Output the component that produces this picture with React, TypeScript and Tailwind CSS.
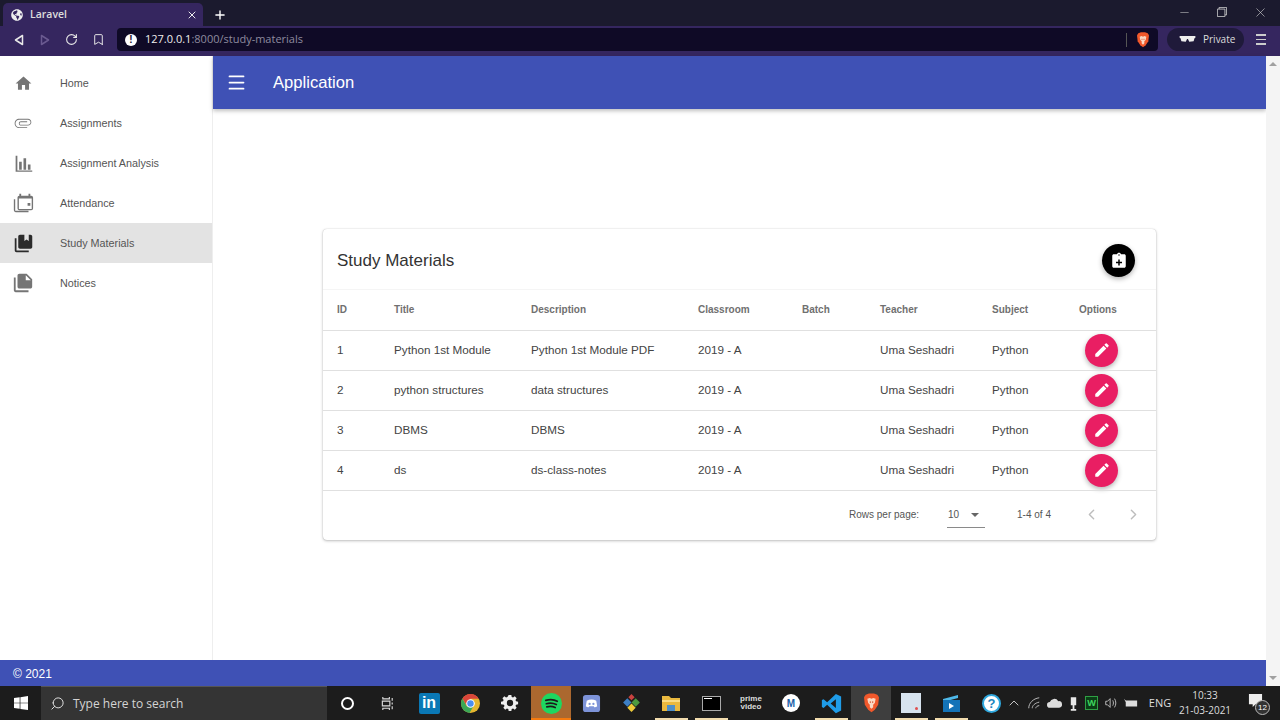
import { FaGlobeAmericas } from "react-icons/fa";
import { Plus, X, Minus, RotateCw, Bookmark, Menu, Search, ChevronUp, ChevronLeft, ChevronRight } from "lucide-react";

const ROWS = [
  { id: 1, title: "Python 1st Module", desc: "Python 1st Module PDF" },
  { id: 2, title: "python structures", desc: "data structures" },
  { id: 3, title: "DBMS", desc: "DBMS" },
  { id: 4, title: "ds", desc: "ds-class-notes" },
];

const HEADS = ["ID", "Title", "Description", "Classroom", "Batch", "Teacher", "Subject"];

const Mui = ({ d, className }: { d: string; className?: string }) => (
  <svg viewBox="0 0 24 24" className={className} fill="currentColor">
    <path d={d} />
  </svg>
);

const NAV = [
  { label: "Home", size: "h-[19px] w-[19px]", d: "M10 20v-6h4v6h5v-8h3L12 3 2 12h3v8z" },
  {
    label: "Assignments",
    size: "h-[20px] w-[20px]",
    d: "M2 12.5C2 9.46 4.46 7 7.5 7H18c2.21 0 4 1.79 4 4s-1.79 4-4 4H9.5C8.12 15 7 13.88 7 12.5S8.12 10 9.5 10H17v1H9.41c-.85 0-1.4.7-1.4 1.5s.55 1.5 1.4 1.5H18c1.66 0 3-1.34 3-3s-1.34-3-3-3H7.5C5.02 8 3 10.02 3 12.5S5.02 17 7.5 17H17v1H7.5C4.46 18 2 15.54 2 12.5z",
  },
  {
    label: "Assignment Analysis",
    size: "h-[21px] w-[21px]",
    d: "M3 3h2v17h17v1.500H3zM7 10h3v9H7zM12 6h3v13h-3zM17 13h3v6h-3z",
  },
  {
    label: "Attendance",
    size: "h-[22px] w-[22px]",
    d: "M2 8h1.500v12.500H18V22H4a2 2 0 0 1-2-2zM8 2h2v2h8V2h2v2h1a2 2 0 0 1 2 2v12a2 2 0 0 1-2 2H8a2 2 0 0 1-2-2V6a2 2 0 0 1 2-2zm-.5 5v11.500h14V7zm9.500 5h3v3h-3z",
  },
  {
    label: "Study Materials",
    active: true,
    size: "h-[21px] w-[21px]",
    d: "M4 6H2v14c0 1.1.9 2 2 2h14v-2H4V6zM20 2h-2v7l-2.5-1.5L13 9V2H8c-1.1 0-2 .9-2 2v12c0 1.1.9 2 2 2h12c1.1 0 2-.9 2-2V4c0-1.1-.9-2-2-2z",
  },
  {
    label: "Notices",
    size: "h-[22px] w-[22px]",
    d: "M4 6H2v14c0 1.1.9 2 2 2h14v-2H4V6zM16 2H8c-1.1 0-2 .9-2 2v12c0 1.1.9 2 2 2h12c1.1 0 2-.9 2-2V8l-6-6zm-1 7V3.500L20.500 9z",
  },
];

const PEN = "M3 17.25V21h3.75L17.81 9.94l-3.75-3.75L3 17.25zM20.71 7.04a1 1 0 0 0 0-1.41l-2.34-2.34a1 1 0 0 0-1.41 0l-1.83 1.83 3.75 3.75 1.83-1.83z";

const BraveLogo = ({ className }: { className?: string }) => (
  <svg viewBox="0 0 20 24" className={className}>
    <path d="M3 2l4-1.5h6L17 2l2 3-1 9-4 6-4 3-4-3-4-6-1-9z" fill="#f1582b" />
    <path d="M5 7l3-1 2 1 2-1 3 1-1 5-2 2v3l-2 2-2-2v-3l-2-2z" fill="#fbd9c4" />
    <path d="M8 10h1v2H8zM11 10h1v2h-1z" fill="#d1401f" />
  </svg>
);

const Slot = ({
  children,
  className = "",
  bar,
}: {
  children: React.ReactNode;
  className?: string;
  bar?: string;
}) => (
  <div className={`relative flex h-full w-10 items-center justify-center ${className}`}>
    {children}
    {bar && <div className={`absolute bottom-0 left-[4px] right-[3px] h-[2px] ${bar}`} />}
  </div>
);

const Taskbar = () => (
  <div className="flex h-[34px] items-center bg-[#1c1c1c] text-white">
    <div className="flex h-full w-[41px] items-center justify-center">
      <svg viewBox="0 0 16 16" className="h-[14px] w-[14px]" fill="#fff">
        <path d="M0 2.3l6.5-.9v6.2H0zM7.3 1.3L16 0v7.6H7.3zM0 8.4h6.5v6.2L0 13.7zM7.3 8.4H16V16l-8.7-1.2z" />
      </svg>
    </div>
    <div className="flex h-full w-[286px] items-center gap-[8px] border-t border-[#555] bg-[#343434] pl-[9px] font-['Open_Sans',sans-serif] text-[12px] text-[#d4d4d4]">
      <Search size={15} strokeWidth={1.6} className="-scale-x-100 text-[#e0e0e0]" />
      <span>Type here to search</span>
    </div>
    <Slot>
      <div className="h-[13px] w-[13px] rounded-full border-[2px] border-white" />
    </Slot>
    <Slot>
      <svg viewBox="0 0 16 16" className="h-[15px] w-[15px]" fill="none" stroke="#ddd" strokeWidth="1.2">
        <path d="M3 1v2h7V1M3 15v-2h7v2M2.5 5.5h8v5h-8zM13 2v3M13 7v2M13 11v3" />
      </svg>
    </Slot>
    <Slot className="ml-[2px]">
      <div className="flex h-[21px] w-[21px] items-center justify-center rounded-[2px] bg-[#0a78b5] font-['Liberation_Sans',sans-serif] text-[16px] font-bold leading-none">
        in
      </div>
    </Slot>
    <Slot className="ml-[1px]">
      <svg viewBox="0 0 20 20" className="h-[19px] w-[19px]">
        <circle cx="10" cy="10" r="10" fill="#e5b62f" />
        <path d="M10 0a10 10 0 0 0-8.5 4.8L6 12l4-7h8.7A10 10 0 0 0 10 0z" fill="#d9453a" />
        <path d="M1.5 4.8A10 10 0 0 0 9 20l4-7-7 0z" fill="#3aa757" />
        <circle cx="10" cy="10" r="4.5" fill="#fff" />
        <circle cx="10" cy="10" r="3.4" fill="#4a8ef0" />
      </svg>
    </Slot>
    <Slot>
      <svg viewBox="0 0 20 20" className="h-[18px] w-[18px]" fill="#eee">
        <path d="M8.5 1h3l.4 2.3 1.5.6 1.9-1.3 2.1 2.1-1.3 1.9.6 1.5 2.3.4v3l-2.3.4-.6 1.5 1.3 1.9-2.1 2.1-1.9-1.3-1.5.6-.4 2.3h-3l-.4-2.3-1.5-.6-1.9 1.3-2.1-2.1 1.3-1.9-.6-1.5L0 11.5v-3l2.3-.4.6-1.5L1.6 4.7l2.1-2.1 1.9 1.3 1.5-.6zM10 6.5a3.5 3.5 0 1 0 0 7 3.5 3.5 0 0 0 0-7z" />
      </svg>
    </Slot>
    <Slot className="ml-[1px] bg-[#ab682f]" bar="!left-0 !right-0 bg-[#f57a0e]">
      <svg viewBox="0 0 20 20" className="h-[21px] w-[21px]" fill="none">
        <circle cx="10" cy="10" r="10" fill="#1ed760" />
        <path d="M4.5 7c4-1.2 8-.9 11 .9M5 10.2c3.400-1 6.800-.7 9.600.8M5.500 13.200c2.800-.8 5.600-.6 8 .7" stroke="#1c1c1c" strokeWidth="1.6" strokeLinecap="round" />
      </svg>
    </Slot>
    <Slot>
      <svg viewBox="0 0 20 20" className="h-[19px] w-[19px]">
        <rect width="18" height="18" x="1" y="1" rx="3" fill="#7d93d8" />
        <path d="M5 7c3-1.600 7-1.600 10 0l1 6c-1 1-2 1-3 1l-.7-1H7.700L7 14c-1 0-2 0-3-1z" fill="#fff" />
        <circle cx="8" cy="10.500" r="1.200" fill="#7d93d8" />
        <circle cx="12" cy="10.500" r="1.200" fill="#7d93d8" />
      </svg>
    </Slot>
    <Slot>
      <svg viewBox="0 0 20 20" className="h-[21px] w-[21px]">
        <path d="M6 5l4 4-4 4-4-4z" fill="#3d7fc4" />
        <path d="M14 5l4 4-4 4-4-4z" fill="#4c9a3f" />
        <path d="M10 10l4 4-4 4-4-4z" fill="#eecb3a" />
        <path d="M10 1l3 3-3 3-3-3z" fill="#c9433f" />
      </svg>
    </Slot>
    <Slot bar="bg-[#f1dcae]">
      <svg viewBox="0 0 20 20" className="h-[20px] w-[20px]">
        <path d="M1 3h7l2 2h9v13H1z" fill="#eab93f" />
        <path d="M1 7h18v2H1z" fill="#f9dc85" />
        <path d="M6 12h8v6H6z" fill="#4d8fc9" />
      </svg>
    </Slot>
    <Slot bar="bg-[#f1dcae]">
      <div className="h-[15px] w-[19px] border border-[#aaa] bg-black p-[1px]">
        <div className="h-[1px] w-2 bg-white" />
      </div>
    </Slot>
    <Slot>
      <div className="flex flex-col items-center font-['Liberation_Sans',sans-serif] text-[8px] font-bold leading-[8px] text-[#ddd]">
        <span>prime</span>
        <span>video</span>
      </div>
    </Slot>
    <Slot>
      <div className="flex h-[18px] w-[18px] items-center justify-center rounded-full bg-white text-[10px] font-bold text-[#1b5fa8]">
        M
      </div>
    </Slot>
    <Slot bar="bg-[#f1dcae]">
      <svg viewBox="0 0 24 24" className="h-[21px] w-[21px]" fill="#1f9ce8">
        <path d="M17 1l6 3v16l-6 3-10-9.500L3 17l-2-1V8l2-1 4 3.500zM17 7l-6 5 6 5z" />
      </svg>
    </Slot>
    <Slot className="bg-[#3e3e3e]">
      <BraveLogo className="h-[20px] w-[17px]" />
    </Slot>
    <Slot bar="bg-[#f1dcae]">
      <div className="flex h-[20px] w-[20px] items-end justify-end bg-[#d7e3ee] p-[3px]">
        <div className="h-[3px] w-[3px] rounded-full bg-[#e05050]" />
      </div>
    </Slot>
    <Slot bar="bg-[#f1dcae]">
      <svg viewBox="0 0 20 20" className="h-[20px] w-[20px]">
        <path d="M2 6l15-4v3L2 9z" fill="#4eb8e8" />
        <path d="M2 7h17v12H2z" fill="#1473b8" />
        <path d="M8 10l5 3-5 3z" fill="#fff" />
      </svg>
    </Slot>
    <Slot className="w-[41px]">
      <div className="flex h-[19px] w-[19px] items-center justify-center rounded-full border-[2px] border-[#2fa8de] bg-white text-[13px] font-bold leading-none text-[#1c86c0]">
        ?
      </div>
    </Slot>
    <ChevronUp size={16} strokeWidth={1.3} className="ml-[-6px] text-[#ddd]" />
    <div className="ml-[5px] flex items-center font-['Open_Sans',sans-serif] text-[11px] text-[#ddd]">
      <svg viewBox="0 0 16 16" className="h-[14px] w-[14px]" fill="none" stroke="#bbb" strokeWidth="1.1">
        <path d="M2 14C2 8 7 3 14 2M6 14c0-3 3-6 8-7M10 14c0-1.500 2-3 4-3" />
      </svg>
      <svg viewBox="0 0 16 10" className="ml-[6px] h-[10px] w-[15px]" fill="#ddd">
        <path d="M3 10a3 3 0 0 1 0-6 5 5 0 0 1 9-1 3.500 3.500 0 0 1 1 7z" />
      </svg>
      <svg viewBox="0 0 10 16" className="ml-[7px] h-[15px] w-[9px]" fill="#e8e8e8">
        <path d="M2 1h6v9H2zM4 10h2v4h2v2H2v-2h2z" />
      </svg>
      <div className="ml-[7px] flex h-[14px] w-[13px] items-center justify-center border border-[#2ea043] bg-[#0b3d16] text-[9px] font-bold text-[#3fd45f]">
        W
      </div>
      <svg viewBox="0 0 16 16" className="ml-[6px] h-[14px] w-[14px]" fill="none" stroke="#bbb" strokeWidth="1.1">
        <path d="M2 6v4h2l3 3V3L4 6zM10 5c1 2 1 4 0 6M12 3c2 3 2 7 0 10" />
      </svg>
      <svg viewBox="0 0 16 10" className="ml-[6px] h-[10px] w-[14px]" fill="#ddd">
        <path d="M2 2h13v7H2zM0 0l2 2v2z" />
      </svg>
      <span className="ml-[7px] w-[30px] text-center">ENG</span>
    </div>
    <div className="flex w-[60px] flex-col items-center whitespace-nowrap font-['Open_Sans',sans-serif] text-[10px] leading-[15px] text-[#ddd]">
      <span>10:33</span>
      <span>21-03-2021</span>
    </div>
    <div className="relative ml-[13px] h-[20px] w-[20px]">
      <svg viewBox="0 0 16 16" className="h-[15px] w-[15px]" fill="#eee">
        <path d="M1 1h14v11H8l-3 3v-3H1zM3 4h10v1H3zM3 6.500h10v1H3zM3 9h7v1H3z" />
      </svg>
      <div className="absolute bottom-[-2px] right-[-2px] flex h-[15px] w-[15px] items-center justify-center rounded-full border border-[#bbb] bg-[#333] text-[8px] leading-none">
        12
      </div>
    </div>
  </div>
);

const BrowserChrome = () => (
  <>
    <div className="flex h-[26px] items-end bg-[#1b1a2e] pl-[3px] text-white">
      <div className="flex h-[23px] w-[200px] items-center rounded-t-[5px] bg-[#35265f] pl-[8px] pr-[5px]">
        <FaGlobeAmericas size={12} className="text-[#eee]" />
        <span className="ml-[7px] flex-1 font-['Open_Sans',sans-serif] text-[10.500px] font-semibold text-[#ddd]">Laravel</span>
        <X size={12} strokeWidth={2} className="text-[#eee]" />
      </div>
      <div className="flex h-[23px] w-[33px] items-center justify-center">
        <Plus size={14} strokeWidth={2.4} />
      </div>
      <div className="flex-1" />
      <div className="flex h-[24px] items-center self-start text-[#d0d0d0]">
        <Minus size={13} strokeWidth={1} className="mr-[26px]" />
        <svg viewBox="0 0 12 12" className="mr-[26px] h-[10px] w-[10px]" fill="none" stroke="currentColor">
          <path d="M.5 2.500h9v9h-9zM2.500 2.500v-2h9v9h-2" />
        </svg>
        <X size={15} strokeWidth={1} className="mr-[12px]" />
      </div>
    </div>
    <div className="flex h-[30px] items-start bg-[#35265f] pt-[2px] text-white">
      <div className="flex h-[23px] w-[117px] items-center">
        <svg viewBox="0 0 12 12" className="ml-[13px] h-[12px] w-[12px]" fill="none" stroke="#e8e8e8" strokeWidth="1.500">
          <path d="M9.500 1.500v9L2.500 6z" strokeLinejoin="round" />
        </svg>
        <svg viewBox="0 0 12 12" className="ml-[14px] h-[12px] w-[12px]" fill="none" stroke="#6a5a90" strokeWidth="1.500">
          <path d="M2.500 1.500v9L9.500 6z" strokeLinejoin="round" />
        </svg>
        <RotateCw size={13} strokeWidth={2} className="ml-[14px] text-[#e8e8e8]" />
        <Bookmark size={13} strokeWidth={1.800} className="ml-[14px] text-[#e8e8e8]" />
      </div>
      <div className="flex h-[23px] w-[1041px] items-center rounded-[4px] bg-[#0f0a26] pl-[8px]">
        <div className="flex h-[12px] w-[12px] items-center justify-center rounded-full bg-white font-['Liberation_Sans',sans-serif] text-[10px] font-bold leading-none text-[#0f0a26]">
          !
        </div>
        <span className="ml-[8px] flex-1 font-['Open_Sans',sans-serif] text-[11px]">
          <span className="text-[#eee]">127.0.0.1</span>
          <span className="text-[#8e8a9f]">:8000/study-materials</span>
        </span>
        <div className="h-[14px] w-px bg-[#555]" />
        <BraveLogo className="ml-[9px] mr-[8px] h-[16px] w-[14px]" />
      </div>
      <div className="ml-[9px] flex h-[23px] w-[77px] items-center rounded-full bg-[#1f1a3a] pl-[12px]">
        <svg viewBox="0 0 18 8" className="h-[7px] w-[17px]" fill="#eee">
          <path d="M0 0h18v2l-1 .500-1 3.500-5 .500-1.500-3h-1L7 6.500 2 6 1 2.500 0 2z" />
        </svg>
        <span className="ml-[7px] font-['Open_Sans',sans-serif] text-[10px] text-[#ddd]">Private</span>
      </div>
      <div className="ml-[12px] flex h-[23px] flex-col justify-center gap-[3px]">
        <div className="h-[1.500px] w-[10px] bg-[#ccc]" />
        <div className="h-[1.500px] w-[10px] bg-[#ccc]" />
        <div className="h-[1.500px] w-[10px] bg-[#ccc]" />
      </div>
    </div>
  </>
);

const Sidebar = () => (
  <aside className="w-[213px] shrink-0 border-r border-[#eeeeee] pt-[7px]">
    {NAV.map((item) => (
      <div
        key={item.label}
        className={`flex h-10 items-center pl-[11px] text-[10.800px] text-[#555] ${item.active ? "bg-[#e3e3e3]" : ""}`}
      >
        <div className="flex h-6 w-6 items-center justify-center">
          <Mui d={item.d} className={`${item.size} ${item.active ? "text-[#2b2b2b]" : "text-[#757575]"}`} />
        </div>
        <span className="ml-[25px]">{item.label}</span>
      </div>
    ))}
  </aside>
);

const MaterialsCard = () => (
  <div className="rounded-[4px] bg-white shadow-[0_1px_3px_rgba(0,0,0,0.25),0_0_1px_rgba(0,0,0,0.25)]">
    <div className="flex h-[61px] items-center justify-between border-b border-[#f5f5f5] pl-[14px] pr-[21px] pt-[3px]">
      <h1 className="text-[17px] text-[#333]">Study Materials</h1>
      <button className="flex h-[33px] w-[33px] items-center justify-center rounded-full bg-black shadow-[0_2px_5px_rgba(0,0,0,0.3)]">
        <Mui
          d="M19 3h-4.180C14.400 1.840 13.300 1 12 1s-2.400.84-2.820 2H5c-1.100 0-2 .9-2 2v14c0 1.100.9 2 2 2h14c1.100 0 2-.9 2-2V5c0-1.100-.9-2-2-2zm-7 0c.55 0 1 .45 1 1s-.45 1-1 1-1-.45-1-1 .45-1 1-1zm4 12h-3v3h-2v-3H8v-2h3v-3h2v3h3v2z"
          className="h-[18px] w-[18px] text-white"
        />
      </button>
    </div>
    <table className="w-full table-fixed border-collapse text-left text-[11.700px] text-[#444]">
      <colgroup>
        <col className="w-[57px]" />
        <col className="w-[137px]" />
        <col className="w-[167px]" />
        <col className="w-[104px]" />
        <col className="w-[78px]" />
        <col className="w-[112px]" />
        <col className="w-[87px]" />
        <col />
      </colgroup>
      <thead>
        <tr className="h-10 border-b border-[#e0e0e0] text-[10px] text-[#707070]">
          {HEADS.map((h) => (
            <th key={h} className="pl-[14px] font-bold">
              {h}
            </th>
          ))}
          <th className="pl-[14px] font-bold">Options</th>
        </tr>
      </thead>
      <tbody>
        {ROWS.map((r) => (
          <tr key={r.id} className="h-10 border-b border-[#e0e0e0]">
            <td className="pl-[14px]">{r.id}</td>
            <td className="pl-[14px]">{r.title}</td>
            <td className="pl-[14px]">{r.desc}</td>
            <td className="pl-[14px]">2019 - A</td>
            <td className="pl-[14px]" />
            <td className="pl-[14px]">Uma Seshadri</td>
            <td className="pl-[14px]">Python</td>
            <td className="pl-5">
              <button className="flex h-[33px] w-[33px] items-center justify-center rounded-full bg-[#e91e63] shadow-[0_2px_5px_rgba(0,0,0,0.3)]">
                <Mui d={PEN} className="h-[18px] w-[18px] text-white" />
              </button>
            </td>
          </tr>
        ))}
      </tbody>
    </table>
    <div className="flex h-[49px] items-center text-[10px] text-[#555]">
      <span className="ml-[526px] mt-[-1px]">Rows per page:</span>
      <div className="ml-[28px] flex h-[26px] w-[38px] items-center justify-between border-b border-[#8a8a8a] pl-[1px] pr-[6px]">
        <span>10</span>
        <div className="h-0 w-0 border-x-[4px] border-t-[4px] border-x-transparent border-t-[#666]" />
      </div>
      <span className="ml-[32px] mt-[-1px]">1-4 of 4</span>
      <ChevronLeft size={17} className="ml-[32px] mt-[-1px] text-[#bdbdbd]" />
      <ChevronRight size={17} className="ml-[25px] mt-[-1px] text-[#bdbdbd]" />
    </div>
  </div>
);

export default function App() {
  return (
    <div className="flex h-screen w-full flex-col overflow-hidden bg-white font-['Liberation_Sans',sans-serif]">
      <BrowserChrome />
      <div className="flex min-h-0 flex-1">
        <div className="flex min-w-0 flex-1 flex-col">
          <div className="flex min-h-0 flex-1">
            <Sidebar />
            <div className="flex min-w-0 flex-1 flex-col">
              <header className="flex h-[53px] shrink-0 items-center bg-[#3f51b5] pl-[13px] text-white shadow-[0_2px_4px_rgba(0,0,0,0.25)]">
                <Menu size={21} strokeWidth={2} />
                <span className="ml-[26px] pt-[2px] text-[16.600px]">Application</span>
              </header>
              <main className="px-[110px] pt-[120px]">
                <MaterialsCard />
              </main>
            </div>
          </div>
          <footer className="flex h-[26px] shrink-0 items-center bg-[#3f51b5] pl-[13px] pt-[1px] text-[12px] text-white">
            © 2021
          </footer>
        </div>
        <div className="flex w-[14px] shrink-0 flex-col items-center justify-between bg-[#f4f4f4] py-[6px]">
          <div className="h-0 w-0 border-x-[4px] border-b-[4px] border-x-transparent border-b-[#a0a0a0]" />
          <div className="h-0 w-0 border-x-[4px] border-t-[4px] border-x-transparent border-t-[#a0a0a0]" />
        </div>
      </div>
      <Taskbar />
    </div>
  );
}
